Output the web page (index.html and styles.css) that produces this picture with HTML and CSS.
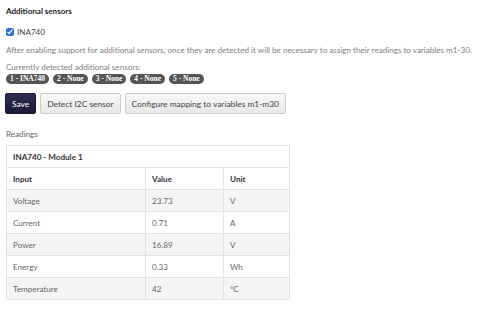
FILE: index.html
```html
<!DOCTYPE html>
<html>
<head>
<meta charset="utf-8">
<link rel="stylesheet" href="styles.css">
</head>
<body>
<div class="page">
  <h3 class="title">Additional sensors</h3>
  <label class="check"><input type="checkbox" checked> <span>INA740</span></label>
  <p class="note">After enabling support for additional sensors, once they are detected it will be necessary to assign their readings to variables m1-30.</p>
  <p class="detected">Currently detected additional sensors:</p>
  <div class="badges">
    <span class="badge">1 - INA740</span>
    <span class="badge">2 - None</span>
    <span class="badge">3 - None</span>
    <span class="badge">4 - None</span>
    <span class="badge">5 - None</span>
  </div>
  <div class="buttons">
    <button class="btn primary">Save</button>
    <button class="btn detect">Detect I2C sensor</button>
    <button class="btn config">Configure mapping to variables m1-m30</button>
  </div>
  <p class="readings">Readings</p>
  <table class="tbl">
    <tr class="cap"><th colspan="3">INA740 - Module 1</th></tr>
    <tr class="head"><th class="c1">Input</th><th class="c2">Value</th><th class="c3">Unit</th></tr>
    <tr class="odd"><td>Voltage</td><td>23.73</td><td>V</td></tr>
    <tr><td>Current</td><td>0.71</td><td>A</td></tr>
    <tr class="odd"><td>Power</td><td>16.89</td><td>V</td></tr>
    <tr><td>Energy</td><td>0.33</td><td>Wh</td></tr>
    <tr class="odd"><td>Temperature</td><td>42</td><td>°C</td></tr>
  </table>
</div>
</body>
</html>
```
FILE: styles.css
```css
html, body { margin: 0; padding: 0; background: #fff; }
body { font-family: Lato, "Open Sans", sans-serif; font-size: 8.1px; color: #333; }
.page { padding: 4px 6px; }
.title { font-size: 8px; font-weight: 700; margin: 2px 0 0; line-height: 10px; color: #222; }
.check { display: flex; align-items: center; gap: 3px; margin-top: 11px; height: 10px; color: #444; }
.check input { width: 8px; height: 8px; margin: 0; accent-color: #2a6fd6; }
.note { margin: 8px 0 0; line-height: 10px; color: #808080; }
.detected { margin: 7px 0 0; line-height: 10px; color: #808080; }
.badges { display: flex; gap: 4px; margin-top: 2px; }
.badge { background: #555; color: #fff; font-family: "Liberation Serif", serif; font-weight: 700; font-size: 7.5px; line-height: 10px; padding: 0 4px; border-radius: 6px; }
.buttons { display: flex; gap: 4px; margin-top: 9px; margin-left: -1px; }
.btn { font-family: Lato, sans-serif; font-size: 8.4px; color: #444; height: 21px; padding: 0 8px; border: 1px solid #ccc; border-radius: 2px; background: linear-gradient(#f8f8f8, #e8e8e8); }
.btn.primary { background: linear-gradient(#2e2e50, #1a1a35); color: #fff; border-color: #1a1a30; padding: 0 6px; }
.btn.detect { padding: 0 6px; }
.btn.config { padding: 0 6px; }
.readings { margin: 15px 0 0; line-height: 10px; color: #666; }
.tbl { border-collapse: collapse; margin-top: 6px; width: 284px; }
.tbl th, .tbl td { border: 1px solid #e2e2e2; text-align: left; padding: 0 6px; height: 21px; }
.tbl th { font-weight: 700; color: #333; }
.tbl td { color: #666; }
.tbl .cap th { background: #fff; }
.tbl .c1 { width: 126px; }
.tbl .c2 { width: 65px; }
.odd td { background: #f5f5f5; }
```
